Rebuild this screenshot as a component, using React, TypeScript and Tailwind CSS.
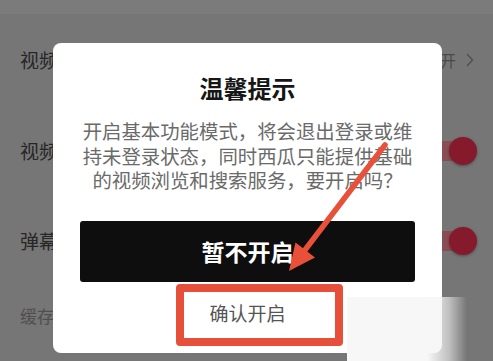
import React from "react";

function Toggle() {
  return (
    <div className="relative h-[28px] w-[48px]">
      <div className="absolute left-0 top-[4px] h-[20px] w-[40px] rounded-full bg-[#8a4d54]" />
      <div className="absolute right-0 top-0 h-[28px] w-[28px] rounded-full bg-[#861a2d] shadow-[0_1px_3px_rgba(0,0,0,0.35)]" />
    </div>
  );
}

function Chevron() {
  return (
    <svg width="8" height="14" viewBox="0 0 8 14" fill="none">
      <polyline points="1.5,1.5 6.5,7 1.5,12.5" stroke="#505050" strokeWidth="1.4" strokeLinecap="round" strokeLinejoin="round" />
    </svg>
  );
}

export default function App() {
  return (
    <div className="relative h-[361px] w-[493px] overflow-hidden bg-[#767676] font-['Noto_Sans_CJK_SC','Noto_Sans',sans-serif]">
      {/* settings page behind the dialog */}
      <div className="h-[14px] bg-[#7b7b7b]" />
      <div className="flex h-[92px] items-center justify-between pl-[20px] pr-[19px]">
        <span className="text-[19px] text-[#262626]">视频</span>
        <div className="flex items-center gap-[10px]">
          <span className="text-[16px] text-[#4a4a4a]">已开</span>
          <Chevron />
        </div>
      </div>
      <div className="flex h-[90px] items-center justify-between pl-[20px] pr-[16px]">
        <span className="text-[19px] text-[#262626]">视频</span>
        <Toggle />
      </div>
      <div className="flex h-[90px] items-center justify-between pl-[20px] pr-[16px]">
        <span className="text-[19px] text-[#262626]">弹幕</span>
        <Toggle />
      </div>
      <div className="flex h-[60px] items-center pl-[20px]">
        <span className="text-[17px] text-[#4f4f4f]">缓存</span>
      </div>

      {/* dialog */}
      <div className="absolute left-[53px] top-[43px] flex h-[310px] w-[389px] flex-col items-center rounded-[8px] bg-white">
        <h2 className="pt-[30px] text-[24px] font-bold leading-[30px] text-[#161616]">温馨提示</h2>
        <p className="mt-[16px] w-[335px] text-center text-[19.4px] leading-[24.5px] text-[#6a6a6a]">
          开启基本功能模式，将会退出登录或维持未登录状态，同时西瓜只能提供基础的视频浏览和搜索服务，要开启吗？
        </p>
        <button className="mt-[28px] h-[61px] w-[335px] rounded-[3px] bg-[#0e0e0e] text-[23px] font-bold text-white">
          暂不开启
        </button>
        <button className="flex h-[64px] items-center text-[19px] text-[#555555]">确认开启</button>
        <div className="absolute left-[123px] top-[241px] h-[62px] w-[167px] rounded-[4px] border-[8px] border-[#e6503b]" />
      </div>

      {/* annotation arrow */}
      <svg className="pointer-events-none absolute left-0 top-0" width="493" height="361" viewBox="0 0 493 361">
        <line x1="385" y1="145" x2="305" y2="250" stroke="#e8503a" strokeWidth="5.5" strokeLinecap="round" />
        <polygon points="289,271 315,257.5 295.5,242.5" fill="#e8503a" />
      </svg>

      {/* watermark smear */}
      <div className="absolute left-[347px] top-[297px] h-[64px] w-[146px] bg-linear-to-r from-[#f7f7f7] from-55% via-[#f0f0f0]/60 via-70% to-transparent to-82%" />
    </div>
  );
}
